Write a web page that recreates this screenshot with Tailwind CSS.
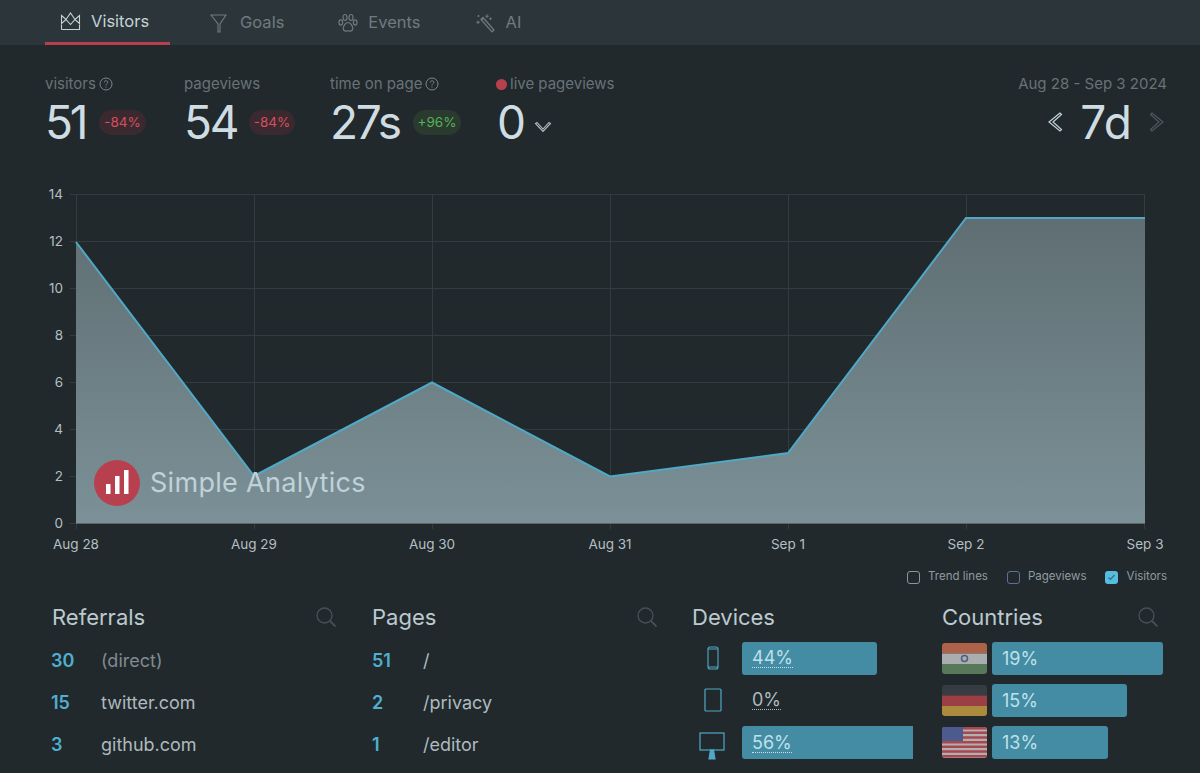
<!DOCTYPE html>
<html lang="en">
<head>
<meta charset="utf-8">
<title>Simple Analytics</title>
<script src="https://cdn.jsdelivr.net/npm/@tailwindcss/browser@4"></script>
</head>
<body class="bg-[#21292c] font-['Inter','Liberation_Sans',sans-serif] h-[773px] overflow-hidden">
<nav class="h-[45px] bg-[#2c363a] flex pl-[45px] text-[16.5px] text-[#6f7b7f]">
  <a class="w-[125px] h-[45px] border-b-[3px] border-[#b8404e] flex items-center pl-[15px] gap-[10px] text-[#c3d2d8]">
    <svg class="w-[21px] h-[20px]" viewBox="0 0 21 20" fill="none" stroke="#c3d2d8" stroke-width="1.1"><path d="M1.5 4.5l4.5 4 4.5-6.500 4.500 6.500 4.500-4v8l-4.500-4-4.500 5-4.500-5-4.500 4z"/><path d="M1.500 18.500h18v-5M1.500 18.500v-5"/></svg>
    <span>Visitors</span>
  </a>
  <a class="ml-[39px] flex items-center gap-[11px] h-[45px]">
    <svg class="w-[20px] h-[20px]" viewBox="0 0 20 20" fill="none" stroke="#6f7b7f" stroke-width="1.100"><path d="M1.500 2h15L10.500 11v8H8.500v-8z" transform="translate(.5 0)"/></svg>
    <span>Goals</span>
  </a>
  <a class="ml-[54px] flex items-center gap-[10px] h-[45px]">
    <svg class="w-[20px] h-[20px]" viewBox="0 0 20 20" fill="none" stroke="#6f7b7f" stroke-width="1.200"><ellipse cx="7" cy="4.500" rx="2" ry="3"/><ellipse cx="13" cy="4.500" rx="2" ry="3"/><ellipse cx="2.800" cy="9.500" rx="1.800" ry="2.600"/><ellipse cx="17.200" cy="9.500" rx="1.800" ry="2.600"/><path d="M10 9.500c-2.500 0-4.800 3.600-4.800 6 0 2.800 3 2.800 4.800 2.200 1.800.6 4.800.6 4.800-2.200 0-2.400-2.300-6-4.800-6z"/></svg>
    <span>Events</span>
  </a>
  <a class="ml-[54px] flex items-center gap-[11px] h-[45px]">
    <svg class="w-[20px] h-[20px]" viewBox="0 0 20 20" fill="none" stroke="#6f7b7f" stroke-width="1.200"><path d="M6 6.500l2-2 11 12.500-2 1.800zM6.500 7l2-2"/><path d="M12 1.500v3.500M10.300 3.200h3.500M3 7.500v3.500M1.300 9.200h3.500M15.500 4.500v2.500M14.300 5.700h2.500M3.500 2v2M2.500 3h2" stroke-width="1"/></svg>
    <span>AI</span>
  </a>
</nav>

<section class="flex justify-between pl-[45px] pr-[33px] pt-[29px] h-[124px]">
  <div class="flex">
    <div class="w-[139px]">
      <div class="flex items-center gap-[3px] h-[20px] text-[15px] text-[#687377]">visitors
        <svg class="w-[14px] h-[14px]" viewBox="0 0 14 14" fill="none" stroke="#7d888c"><circle cx="7" cy="7" r="6"/><path d="M5.200 5.500c0-2.300 3.600-2.300 3.600-.2 0 1.400-1.800 1.400-1.800 3M7 9.500v1"/></svg>
      </div>
      <div class="flex items-center mt-[3px] h-[50px]">
        <span class="text-[46px] leading-none tracking-[-0.07em] text-[#cfdde2] w-[54px]">51</span>
        <span class="h-[25px] w-[47px] rounded-full bg-[#3a2a2f] text-[#d64f5f] text-[13.500px] flex items-center justify-center">-84%</span>
      </div>
    </div>
    <div class="w-[146px]">
      <div class="h-[20px] flex items-center text-[15px] text-[#687377]">pageviews</div>
      <div class="flex items-center mt-[3px] h-[50px]">
        <span class="text-[46px] leading-none tracking-[-0.05em] text-[#cfdde2] w-[65px]">54</span>
        <span class="h-[25px] w-[46px] rounded-full bg-[#3a2a2f] text-[#d64f5f] text-[13.500px] flex items-center justify-center">-84%</span>
      </div>
    </div>
    <div class="w-[166px]">
      <div class="flex items-center gap-[3px] h-[20px] text-[15px] text-[#687377]">time on page
        <svg class="w-[14px] h-[14px]" viewBox="0 0 14 14" fill="none" stroke="#7d888c"><circle cx="7" cy="7" r="6"/><path d="M5.200 5.500c0-2.300 3.600-2.300 3.600-.2 0 1.400-1.800 1.400-1.800 3M7 9.500v1"/></svg>
      </div>
      <div class="flex items-center mt-[3px] h-[50px]">
        <span class="text-[46px] leading-none tracking-[-0.05em] text-[#cfdde2] w-[83px]">27s</span>
        <span class="h-[25px] w-[48px] rounded-full bg-[#2a3a2e] text-[#55b25a] text-[13.500px] flex items-center justify-center">+96%</span>
      </div>
    </div>
    <div>
      <div class="flex items-center gap-[3px] h-[20px] text-[15px] text-[#687377]"><span class="w-[11px] h-[11px] rounded-full bg-[#b8404e]"></span>live pageviews</div>
      <div class="flex items-center mt-[3px] h-[50px]">
        <span class="text-[46px] leading-none text-[#cfdde2] w-[37px] ml-[1px]">0</span>
        <svg class="w-[18px] h-[14px] mt-[10px]" viewBox="0 0 18 14" fill="none" stroke="#aebcc1" stroke-width="1.100"><path d="M1.500 3.500L9 11.500l7.500-8-1.500-1L9 9 3 2.500z"/></svg>
      </div>
    </div>
  </div>
  <div class="flex flex-col items-end">
    <div class="h-[20px] flex items-center text-[15px] text-[#687377]">Aug 28 - Sep 3 2024</div>
    <div class="flex items-center h-[50px] mt-[3px] mr-[2px]">
      <svg class="w-[16px] h-[22px]" viewBox="0 0 16 22" fill="none" stroke="#c3d2d8" stroke-width="1.200"><path d="M13 2L2 11l11 9 1.500-1.500L6 11l8.500-7.500z"/></svg>
      <span class="text-[46px] leading-none text-[#cfdde2] mx-[17px]">7d</span>
      <svg class="w-[16px] h-[22px]" viewBox="0 0 16 22" fill="none" stroke="#4d595d" stroke-width="1.200"><path d="M3 2l11 9-11 9-1.500-1.500L10 11 1.500 3.500z"/></svg>
    </div>
  </div>
</section>

<svg class="block w-[1200px] h-[392px]" viewBox="0 169 1200 392" font-size="13.500" fill="#b4bfc3">
  <defs>
    <linearGradient id="area" x1="0" y1="218" x2="0" y2="523" gradientUnits="userSpaceOnUse">
      <stop offset="0" stop-color="#5f6e73"/>
      <stop offset="1" stop-color="#7b9197"/>
    </linearGradient>
  </defs>
  <g stroke="#333d41" stroke-width="1">
    <path d="M70 194.500H1145M70 241.500H1145M70 288.500H1145M70 335.500H1145M70 382.500H1145M70 429.500H1145M70 476.500H1145M70 523.500H1145"/>
    <path d="M76.500 194V529M254.500 194V529M432.500 194V529M610.500 194V529M788.500 194V529M966.500 194V529M1144.500 194V529"/>
  </g>
  <path d="M76 242L254 476L432 382.500L610 476.500L788 453L966 218L1145 218V523.500H76Z" fill="url(#area)"/>
  <path d="M76 242L254 476L432 382.500L610 476.500L788 453L966 218L1145 218" fill="none" stroke="#4fa9c6" stroke-width="2"/>
  <g text-anchor="end">
    <text x="63" y="199">14</text><text x="63" y="246">12</text><text x="63" y="293">10</text><text x="63" y="340">8</text><text x="63" y="387">6</text><text x="63" y="434">4</text><text x="63" y="481">2</text><text x="63" y="528">0</text>
  </g>
  <g text-anchor="middle">
    <text x="76" y="549">Aug 28</text><text x="254" y="549">Aug 29</text><text x="432" y="549">Aug 30</text><text x="610" y="549">Aug 31</text><text x="788" y="549">Sep 1</text><text x="966" y="549">Sep 2</text><text x="1145" y="549">Sep 3</text>
  </g>
  <circle cx="117" cy="483" r="23" fill="#b8404e"/>
  <g fill="#fff"><rect x="106" y="484" width="4.500" height="10"/><rect x="115" y="476" width="4.500" height="18"/><rect x="124" y="470" width="4.500" height="24"/></g>
  <text x="150" y="492" font-size="27" fill="#c0d2d8" letter-spacing="0.3">Simple Analytics</text>
</svg>

<div class="flex justify-end items-center h-[32px] pr-[33px] text-[11.500px] text-[#909ba0]">
  <span class="w-[13px] h-[13px] rounded-[3px] border border-[#8c979b]"></span><span class="ml-[8px]">Trend lines</span>
  <span class="ml-[19px] w-[13px] h-[13px] rounded-[3px] border border-[#5f6f9c]"></span><span class="ml-[8px]">Pageviews</span>
  <span class="ml-[19px] w-[13px] h-[13px] rounded-[3px] bg-[#56bde0] flex items-center justify-center"><svg class="w-[9px] h-[9px]" viewBox="0 0 9 9" fill="none" stroke="#2f6f86" stroke-width="1.200"><path d="M1.500 4.500l2 2 4-4.500"/></svg></span><span class="ml-[8px]">Visitors</span>
</div>

<main class="flex pl-[52px] pt-[11px]">
  <section class="w-[320px] pr-[36px]">
    <header class="flex justify-between items-center h-[26px] text-[22px] text-[#bccacf]">Referrals
      <svg class="w-[20px] h-[20px]" viewBox="0 0 20 20" fill="none" stroke="#465256" stroke-width="1.300"><circle cx="8.500" cy="8.500" r="7.500"/><path d="M14 14l5.500 5.500" stroke-width="1.800"/></svg>
    </header>
    <div class="mt-[9px] text-[18px] text-[#aebabf]">
      <div class="flex items-center h-[42px]"><b class="w-[50px] -ml-[1px] font-semibold text-[#4fb0d0]">30</b><span class="text-[#808b90]">(direct)</span></div>
      <div class="flex items-center h-[42px]"><b class="w-[50px] -ml-[1px] font-semibold text-[#4fb0d0]">15</b><span>twitter.com</span></div>
      <div class="flex items-center h-[42px]"><b class="w-[50px] -ml-[1px] font-semibold text-[#4fb0d0]">3</b><span>github.com</span></div>
    </div>
  </section>
  <section class="w-[320px] pr-[35px]">
    <header class="flex justify-between items-center h-[26px] text-[22px] text-[#bccacf]">Pages
      <svg class="w-[20px] h-[20px]" viewBox="0 0 20 20" fill="none" stroke="#465256" stroke-width="1.300"><circle cx="8.500" cy="8.500" r="7.500"/><path d="M14 14l5.500 5.500" stroke-width="1.800"/></svg>
    </header>
    <div class="mt-[9px] text-[18px] text-[#aebabf]">
      <div class="flex items-center h-[42px]"><b class="w-[51px] font-semibold text-[#4fb0d0]">51</b><span>/</span></div>
      <div class="flex items-center h-[42px]"><b class="w-[51px] font-semibold text-[#4fb0d0]">2</b><span>/privacy</span></div>
      <div class="flex items-center h-[42px]"><b class="w-[51px] font-semibold text-[#4fb0d0]">1</b><span>/editor</span></div>
    </div>
  </section>
  <section class="w-[250px]">
    <header class="flex items-center h-[26px] text-[22px] text-[#bccacf]">Devices</header>
    <div class="mt-[7px] text-[18px] text-[#bfe0ea]">
      <div class="flex items-center h-[42px]">
        <span class="w-[50px] pl-[15px]"><svg class="w-[12px] h-[24px]" viewBox="0 0 12 24" fill="none" stroke="#4fa9c6" stroke-width="1.100"><rect x="1" y="1" width="10" height="22" rx="2"/><path d="M1 3h10M1 21h10"/></svg></span>
        <div class="w-[135px] h-[33px] rounded-[3px] bg-[#438ca3] pl-[10px] flex items-center"><span class="border-b border-dotted border-[#c9dfe6] leading-[19px]">44%</span></div>
      </div>
      <div class="flex items-center h-[42px]">
        <span class="w-[50px] pl-[12px]"><svg class="w-[18px] h-[24px]" viewBox="0 0 18 24" fill="none" stroke="#4fa9c6" stroke-width="1.200"><rect x="1" y="1" width="16" height="22" rx="1"/></svg></span>
        <div class="h-[33px] pl-[10px] flex items-center text-[#aebabf]"><span class="border-b border-dotted border-[#aebabf] leading-[19px]">0%</span></div>
      </div>
      <div class="flex items-center h-[42px]">
        <span class="w-[50px] pl-[7px]"><svg class="w-[26px] h-[28px] mt-[7px] block" viewBox="0 0 26 28" fill="none" stroke="#4fa9c6" stroke-width="1.200"><rect x="1" y="1" width="24" height="17"/><path d="M11.500 18h3l1.500 9h-6z" fill="#4fa9c6"/></svg></span>
        <div class="w-[171px] h-[33px] mt-[1px] bg-[#438ca3] pl-[10px] flex items-center rounded-l-[3px]"><span class="border-b border-dotted border-[#c9dfe6] leading-[19px]">56%</span></div>
      </div>
    </div>
  </section>
  <section class="w-[221px]">
    <header class="flex justify-between items-center h-[26px] text-[22px] text-[#bccacf]">Countries
      <svg class="w-[20px] h-[20px] mr-[5px]" viewBox="0 0 20 20" fill="none" stroke="#465256" stroke-width="1.300"><circle cx="8.500" cy="8.500" r="7.500"/><path d="M14 14l5.500 5.500" stroke-width="1.800"/></svg>
    </header>
    <div class="mt-[7px] text-[18px] text-[#bfe0ea]">
      <div class="flex items-center h-[42px] gap-[5px]">
        <svg class="w-[45px] h-[31px] rounded-[3px]" viewBox="0 0 45 31"><rect width="45" height="10.500" fill="#ad6249"/><rect y="10.500" width="45" height="10.500" fill="#a9adae"/><rect y="21" width="45" height="10" fill="#58785a"/><circle cx="22.500" cy="15.500" r="3" fill="none" stroke="#4e5d83" stroke-width="1.500"/></svg>
        <div class="w-[171px] h-[33px] rounded-[3px] bg-[#438ca3] pl-[10px] flex items-center">19%</div>
      </div>
      <div class="flex items-center h-[42px] gap-[5px]">
        <svg class="w-[45px] h-[31px] rounded-[3px]" viewBox="0 0 45 31"><rect width="45" height="10.500" fill="#363d42"/><rect y="10.500" width="45" height="10.500" fill="#9c3f44"/><rect y="21" width="45" height="10" fill="#ab8a3e"/></svg>
        <div class="w-[135px] h-[33px] rounded-[3px] bg-[#438ca3] pl-[10px] flex items-center">15%</div>
      </div>
      <div class="flex items-center h-[42px] gap-[5px]">
        <svg class="w-[45px] h-[31px] rounded-[3px]" viewBox="0 0 45 31"><rect width="45" height="31" fill="#b5aeb0"/><path d="M0 1.200h45M0 5.800h45M0 10.500h45M0 15.200h45M0 19.800h45M0 24.500h45M0 29.200h45" stroke="#a5484f" stroke-width="2.400"/><rect width="21" height="14" fill="#4c5a8d"/></svg>
        <div class="w-[116px] h-[33px] rounded-[3px] bg-[#438ca3] pl-[10px] flex items-center">13%</div>
      </div>
    </div>
  </section>
</main>
</body>
</html>
